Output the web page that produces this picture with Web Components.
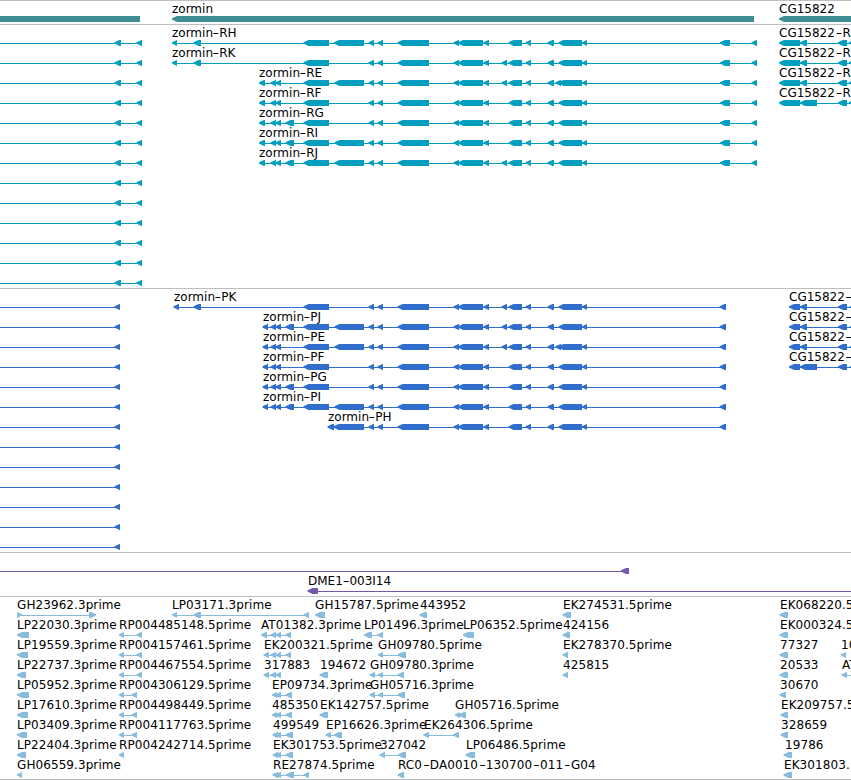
<!DOCTYPE html>
<html lang="en">
<head>
<meta charset="utf-8">
<title>zormin - genome browser</title>
<style>
    body {
        margin: 0;
        background: white;
        overflow: hidden;
        font-family: "DejaVu Sans", sans-serif;
        font-size: 12px;
    }
</style>
</head>
<body>
<genome-view></genome-view>
<script>
const SVG = 'http://www.w3.org/2000/svg'
const featureTemplate = document.createElement('template')

featureTemplate.innerHTML = `
    <style>
        :host {
            grid-area: 1 / 1;
            display: block;
            height: 20px;
        }
        svg {
            display: block;
            width: 100%;
            height: 20px;
            overflow: visible;
        }
        path {
            fill: var(--glyph-color);
        }
        text {
            fill: black;
            letter-spacing: var(--name-spacing, 0);
        }
    </style>
    <svg><path /></svg>
`

// One transcript, protein or EST: exons joined by a thin line, name above
class GenomeFeature extends HTMLElement {
    constructor() {
        super()
        this.attachShadow({mode: 'open'})
        this.shadowRoot.appendChild(featureTemplate.content.cloneNode(true))
    }

    connectedCallback() {
        const exons = this.getAttribute('exons').split(' ').map(e => e.split('-').map(Number))
        const forward = this.getAttribute('strand') == '+'
        const from = this.hasAttribute('open_start') ? 0 : exons[0][0] + 1
        const to = this.hasAttribute('open_end') ? 851 : exons[exons.length - 1][1] - 1
        let d = `M${from} 18H${to}V19H${from}Z`

        exons.forEach(([start, end]) => {
            const tip = Math.min(5, end - start)
            if(start == 0) {
                d += `M0 15H${end}V21H0Z`
            } else if(forward) {
                d += `M${start} 15H${end - tip}L${end} 17.2V18.6L${end - tip} 21H${start}Z`
            } else {
                d += `M${start} 17.2L${start + tip} 15H${end}V21H${start + tip}L${start} 18.6Z`
            }
        })
        this.shadowRoot.querySelector('path').setAttribute('d', d)

        if(this.getAttribute('name')) {
            this.drawName(Math.round(this.getAttribute('name_x') || exons[0][0]))
        }
    }

    drawName(x) {
        const text = document.createElementNS(SVG, 'text')
        const shift = this.getAttribute('dash_shift')
        text.setAttribute('x', x)
        text.setAttribute('y', 12)
        this.getAttribute('name').split(/(-)/).forEach(part => {
            if(part == '-') {
                // wide dash between gene and isoform
                const dash = document.createElementNS(SVG, 'tspan')
                dash.setAttribute('textLength', 6.6)
                dash.setAttribute('lengthAdjust', 'spacingAndGlyphs')
                if(shift) {
                    dash.setAttribute('dx', shift)
                }
                dash.textContent = part
                text.appendChild(dash)
            } else {
                text.appendChild(document.createTextNode(part))
            }
        })
        this.shadowRoot.querySelector('svg').appendChild(text)
    }
}

const laneTemplate = document.createElement('template')

laneTemplate.innerHTML = `
    <style>
        :host {
            display: grid;
            grid-template-columns: 100%;
            height: 20px;
        }
    </style>
    <slot></slot>
`

class GenomeLane extends HTMLElement {
    constructor() {
        super()
        this.attachShadow({mode: 'open'})
        this.shadowRoot.appendChild(laneTemplate.content.cloneNode(true))
    }
}

const trackTemplate = document.createElement('template')

trackTemplate.innerHTML = `
    <style>
        :host {
            display: flex;
            flex-direction: column;
            border-top: 1px solid #bebebe;
            padding-bottom: 3px;
        }
        :host(:last-of-type) {
            --name-spacing: .08px;
            padding-bottom: 2px;
            border-bottom: 1px solid #bebebe;
        }
    </style>
    <slot></slot>
`

class GenomeTrack extends HTMLElement {
    constructor() {
        super()
        this.attachShadow({mode: 'open'})
        this.shadowRoot.appendChild(trackTemplate.content.cloneNode(true))
    }

    connectedCallback() {
        this.style.setProperty('--glyph-color', this.getAttribute('color'))
    }
}

// Exons that every zormin isoform has, and the optional ones
const c = '368.5-374 377.5-383 397.5-429 453.5-459 458-483 483.5-489'
const f = '501.5-507'
const g = '508.5-522 525.5-531 547.5-554'
const x = '555.5-561'
const j = '558.5-582 582-587'
const rnaEnd = '720-730 751.5-757'
const pepEnd = '719.5-726'
const a = '303.5-329'
const b = '334.5-364'
const utr = '259-265 270.5-276 275.5-281'
const cds = '262.5-268 270.5-276 275.5-281'
const u4 = '285.5-294'
const join = (...parts) => parts.filter(Boolean).join(' ')

const rnaLeft = {exons: '114.5-121 136.5-142', open_start: ''}
const pepLeft = {exons: '114.5-120', open_start: ''}
const rnaCG = {name: 'CG15822-R', name_x: 779, dash_shift: 1, exons: '779-800 800-807 838-847 849-855'}
const pepCG = {name: 'CG15822-', name_x: 789, dash_shift: .5, exons: '789-800 800-807 838-847 850-856'}

const rna = [
    ['zormin-RH', join('172-177 193.5-201', a, '334-364', c, g, j, rnaEnd)],
    ['zormin-RK', join('172-177 193.5-201', a, c, f, g, j, rnaEnd)],
    ['zormin-RE', join(utr, a, b, c, f, g, x, j, rnaEnd)],
    ['zormin-RF', join(utr, a, c, g, j, rnaEnd)],
    ['zormin-RG', join(utr, u4, a, c, g, j, rnaEnd)],
    ['zormin-RI', join(utr, u4, a, b, c, g, j, rnaEnd)],
    ['zormin-RJ', join(utr, u4, a, b, c, f, g, j, rnaEnd)]
]
const pep = [
    ['zormin-PK', join('173.5-179 193.5-201', a, c, f, g, j, pepEnd)],
    ['zormin-PJ', join(cds, u4, a, b, c, f, g, j, pepEnd)],
    ['zormin-PE', join(cds, a, b, c, f, g, x, j, pepEnd)],
    ['zormin-PF', join(cds, a, c, g, j, pepEnd)],
    ['zormin-PG', join(cds, u4, a, c, g, j, pepEnd)],
    ['zormin-PI', join(cds, u4, a, b, c, g, j, pepEnd)],
    ['zormin-PH', join('327.5-334 333.5-364', c, g, j, pepEnd)]
]

const isoforms = (left, list, cg, longExon) => Array.from({length: 13}, (_, i) => {
    const lane = [left]
    if(list[i]) {
        lane.push({name: list[i][0], dash_shift: -.4, exons: list[i][1]})
    }
    if(i < 3) {
        lane.push(cg)
    } else if(i == 3) {
        lane.push({...cg, exons: cg.exons.replace('800-807', longExon)})
    }
    return lane
})

const est = (name, exons, extra) => ({name, exons, ...extra})

const tracks = [
    {color: '#3e8d93', lanes: [[
        {exons: '0-140'},
        {name: 'zormin', exons: '172-754'},
        {name: 'CG15822', exons: '779-860'}
    ]]},
    {color: '#009fc0', lanes: isoforms(rnaLeft, rna, rnaCG, '800-817')},
    {color: '#306dcd', lanes: isoforms(pepLeft, pep, pepCG, '800-817')},
    {color: '#7558a8', lanes: [
        [{exons: '621-629', open_start: ''}],
        [{name: 'DME1-003I14', exons: '307.5-318', open_end: ''}]
    ]},
    {color: '#88bcdc', lanes: [
        [
            est('GH23962.3prime', '17-22 89-96', {strand: '+'}),
            est('LP03171.3prime', '172-177 193.5-201 303.5-309'),
            est('GH15787.5prime', '315-325'),
            est('443952', '419.5-427'),
            est('EK274531.5prime', '562.5-571'),
            est('EK068220.5', '779.5-788')
        ],
        [
            est('LP22030.3prime', '17-29'),
            est('RP004485148.5prime', '119-124 136.5-142'),
            est('AT01382.3prime', '261-267 270.5-276 275.5-281 285.5-291'),
            est('LP01496.3prime', '364-372 377.5-383'),
            est('LP06352.5prime', '463-474'),
            est('424156', '562.5-570'),
            est('EK000324.5', '779.5-788')
        ],
        [
            est('LP19559.3prime', '17-28'),
            est('RP004157461.5prime', '119-124 136.5-142'),
            est('EK200321.5prime', '263.5-269 270.5-276 275.5-281 285.5-291'),
            est('GH09780.5prime', '378-383 397.5-406'),
            est('EK278370.5prime', '562.5-568'),
            est('77327', '779.5-788'),
            est('10', '841-846')
        ],
        [
            est('LP22737.3prime', '17-26'),
            est('RP004467554.5prime', '119-124 136.5-142'),
            est('317883', '263.5-269 270.5-276 275.5-281'),
            est('194672', '319.5-328'),
            est('GH09780.3prime', '369.5-375 378-383 397.5-404'),
            est('425815', '562.5-568'),
            est('20533', '779.5-788'),
            est('AT', '841.5-847', {open_end: ''})
        ],
        [
            est('LP05952.3prime', '17-29'),
            est('RP004306129.5prime', '119-124 131.5-137'),
            est('EP09734.3prime', '272-277 275.5-281 285.5-292'),
            est('GH05716.3prime', '369.5-375 378-383 397.5-405'),
            est('30670', '779.5-786')
        ],
        [
            est('LP17610.3prime', '17-28'),
            est('RP004498449.5prime', '119-124 131.5-137'),
            est('485350', '272-277 275.5-281 285.5-292'),
            est('EK142757.5prime', '319.5-328'),
            est('GH05716.5prime', '455-460 459-466'),
            est('EK209757.5', '780.5-788')
        ],
        [
            est('LP03409.3prime', '17-27'),
            est('RP004117763.5prime', '119-124 131.5-137'),
            est('499549', '272.5-278 275.5-281 285.5-293'),
            est('EP16626.3prime', '325.5-331 334-342'),
            est('EK264306.5prime', '423.5-429 453-459'),
            est('328659', '780.5-788')
        ],
        [
            est('LP22404.3prime', '17-26'),
            est('RP004242714.5prime', '119-124'),
            est('EK301753.5prime', '272.5-278 275.5-281 285.5-293'),
            est('327042', '379.5-385 398-406'),
            est('LP06486.5prime', '465.5-475'),
            est('19786', '783.5-792', {name_x: 785})
        ],
        [
            est('GH06559.3prime', '17-22'),
            est('RE27874.5prime', '272.5-278 275.5-281 286-294 303.5-309'),
            est('RC0-DA0010-130700-011-G04', '397.5-404', {dash_shift: 1.2}),
            est('EK301803.', '783.5-792')
        ]
    ]}
]

class GenomeView extends HTMLElement {
    constructor() {
        super()
        this.attachShadow({mode: 'open'})
        this.shadowRoot.innerHTML = `
            <style>
                :host {
                    display: block;
                    width: 851px;
                    height: 780px;
                    overflow: hidden;
                    background: white;
                }
            </style>
        `
    }

    connectedCallback() {
        tracks.forEach(({color, lanes}) => {
            const track = document.createElement('genome-track')
            track.setAttribute('color', color)
            lanes.forEach(features => {
                const lane = document.createElement('genome-lane')
                features.forEach(attrs => {
                    const feature = document.createElement('genome-feature')
                    Object.entries(attrs).forEach(([key, value]) => feature.setAttribute(key, value))
                    lane.appendChild(feature)
                })
                track.appendChild(lane)
            })
            this.shadowRoot.appendChild(track)
        })
    }
}

window.customElements.define('genome-feature', GenomeFeature)
window.customElements.define('genome-lane', GenomeLane)
window.customElements.define('genome-track', GenomeTrack)
window.customElements.define('genome-view', GenomeView)
</script>
</body>
</html>
